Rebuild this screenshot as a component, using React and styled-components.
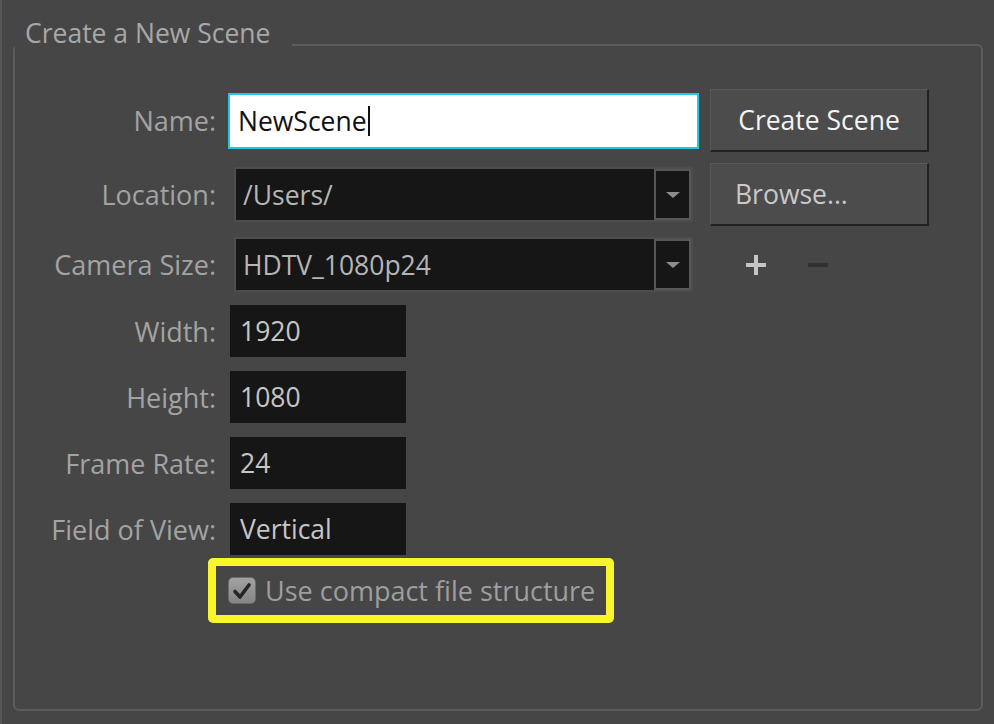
import React from 'react'
import styled, { createGlobalStyle } from 'styled-components'

const GlobalStyle = createGlobalStyle`
  html, body {
    margin: 0;
    padding: 0;
    background: #464646;
  }
  body {
    font-family: "Open Sans", "Liberation Sans", sans-serif;
  }
`

const Window = styled.div`
  box-sizing: border-box;
  min-height: 724px;
  display: flex;
  flex-direction: column;
  padding: 15px 11px 13px 11px;
  border-left: 2px solid #575757;
  background: #464646;
`

const Group = styled.fieldset`
  flex: 1;
  margin: 0;
  padding: 14px 0 0 0;
  min-width: 0;
  border: 2px solid #5c5c5c;
  border-radius: 6px;
`

const Legend = styled.legend`
  padding: 0 22px 24px 10px;
  font-size: 26.5px;
  line-height: 36px;
  color: #a8a8a8;
`

const Row = styled.div`
  display: flex;
  align-items: center;
  margin-top: ${p => p.$top || 0}px;
`

const Label = styled.div`
  flex-shrink: 0;
  width: 201px;
  text-align: right;
  font-size: 27px;
  color: #a3a3a3;
  white-space: nowrap;
`

const NameField = styled.div`
  box-sizing: border-box;
  margin-left: 12px;
  width: 471px;
  height: 56px;
  display: flex;
  align-items: center;
  padding-left: 8px;
  background: #ffffff;
  border: 2px solid #1fc9e0;
  font-size: 26.5px;
  color: #111111;
`

const Caret = styled.span`
  display: inline-block;
  width: 2px;
  height: 30px;
  margin-left: 1px;
  background: #111111;
`

const Button = styled.button`
  box-sizing: border-box;
  margin-left: ${p => p.$left}px;
  width: 219px;
  height: 63px;
  padding: 0 0 0 ${p => (p.$center ? 0 : 24)}px;
  text-align: ${p => (p.$center ? 'center' : 'left')};
  background: #4c4c4c;
  border: none;
  border-top: 1px solid #595959;
  border-left: 1px solid #575757;
  border-right: 2px solid #222222;
  border-bottom: 2px solid #222222;
  font-family: "Open Sans", "Liberation Sans", sans-serif;
  font-size: 26.5px;
  color: ${p => (p.$center ? '#f4f4f4' : '#c9c9c9')};
`

const Dropdown = styled.div`
  box-sizing: border-box;
  margin-left: 18px;
  width: 459px;
  height: 55px;
  display: flex;
  border: 2px solid #4d4d4d;
  background: #161616;
`

const DropValue = styled.div`
  flex: 1;
  display: flex;
  align-items: center;
  padding-left: 7px;
  font-size: 26.5px;
  color: #b5b5b5;
`

const DropArrow = styled.div`
  box-sizing: border-box;
  width: 37px;
  display: flex;
  align-items: center;
  justify-content: center;
  border: 2px solid #575757;
  background: #161616;

  &::after {
    content: '';
    border-left: 7px solid transparent;
    border-right: 7px solid transparent;
    border-top: 6px solid #8c8c8c;
  }
`

const Tools = styled.div`
  display: flex;
  align-items: center;
  gap: 42px;
  margin-left: 53px;
`

const ToolIcon = styled.svg`
  display: block;
  width: 20px;
  height: 20px;
`

const NumberBox = styled.div`
  box-sizing: border-box;
  margin-left: 14px;
  width: 176px;
  height: 52px;
  display: flex;
  align-items: center;
  padding-left: 10px;
  background: #161616;
  font-size: 26.5px;
  color: #c6c6c6;
`

const Highlight = styled.div`
  box-sizing: border-box;
  margin-left: 193px;
  width: 406px;
  height: 65px;
  display: flex;
  align-items: center;
  padding-left: 12px;
  border: 8px solid #f8f52a;
  border-radius: 5px;
`

const CheckBox = styled.div`
  box-sizing: border-box;
  width: 28px;
  height: 27px;
  display: flex;
  align-items: center;
  justify-content: center;
  border-radius: 5px;
  border: 1px solid #6c6c6c;
  background: linear-gradient(#a2a2a2, #858585);
`

const CheckText = styled.span`
  margin-left: 9px;
  font-size: 27px;
  color: #9e9e9e;
  white-space: nowrap;
`

const numberRows = [
  { label: 'Width:', value: '1920', top: 13 },
  { label: 'Height:', value: '1080', top: 14 },
  { label: 'Frame Rate:', value: '24', top: 14 },
  { label: 'Field of View:', value: 'Vertical', top: 14 },
]

const App = () => {
  return (
    <>
      <GlobalStyle />
      <Window>
        <Group>
          <Legend>Create a New Scene</Legend>

          <Row>
            <Label>Name:</Label>
            <NameField>
              NewScene
              <Caret />
            </NameField>
            <Button $center $left={11}>Create Scene</Button>
          </Row>

          <Row $top={11}>
            <Label>Location:</Label>
            <Dropdown>
              <DropValue>/Users/</DropValue>
              <DropArrow />
            </Dropdown>
            <Button $left={17}>Browse...</Button>
          </Row>

          <Row $top={11}>
            <Label>Camera Size:</Label>
            <Dropdown>
              <DropValue>HDTV_1080p24</DropValue>
              <DropArrow />
            </Dropdown>
            <Tools>
              <ToolIcon viewBox="0 0 20 20">
                <path d="M0 10H20M10 0V20" stroke="#c4c4c4" strokeWidth="4" />
              </ToolIcon>
              <ToolIcon viewBox="0 0 20 20">
                <path d="M0 10H20" stroke="#303030" strokeWidth="4" />
              </ToolIcon>
            </Tools>
          </Row>

          {numberRows.map(r => (
            <Row key={r.label} $top={r.top}>
              <Label>{r.label}</Label>
              <NumberBox>{r.value}</NumberBox>
            </Row>
          ))}

          <Row $top={3}>
            <Highlight>
              <CheckBox>
                <svg width="20" height="18" viewBox="0 0 20 18">
                  <path
                    d="M3 9.5L8 15L17 3"
                    fill="none"
                    stroke="#262626"
                    strokeWidth="3.6"
                    strokeLinecap="round"
                    strokeLinejoin="round"
                  />
                </svg>
              </CheckBox>
              <CheckText>Use compact file structure</CheckText>
            </Highlight>
          </Row>
        </Group>
      </Window>
    </>
  )
}

export default App
